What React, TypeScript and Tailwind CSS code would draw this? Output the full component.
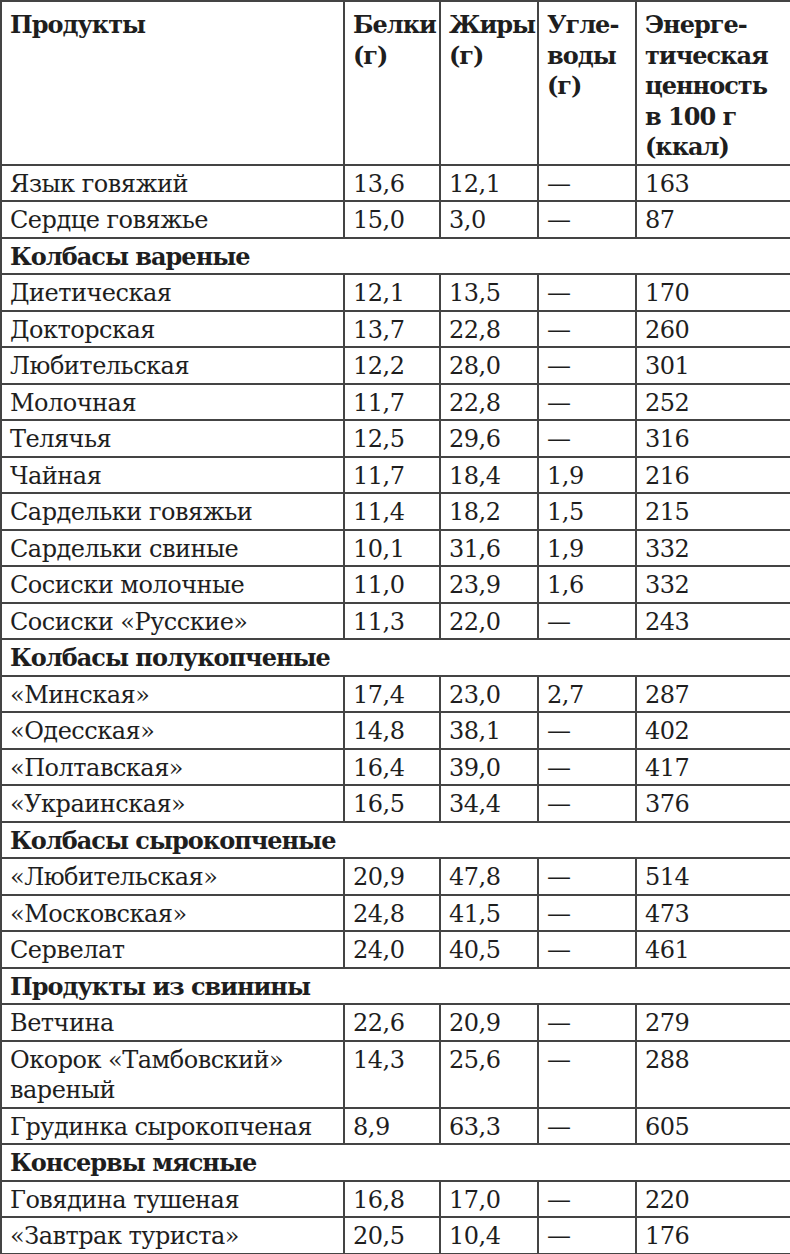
import React from 'react'

type Row =
    | { kind: 'item'; name: string; b: string; f: string; c: string; e: string }
    | { kind: 'section'; name: string }

const rows: Row[] = [
    { kind: 'item', name: 'Язык говяжий', b: '13,6', f: '12,1', c: '—', e: '163' },
    { kind: 'item', name: 'Сердце говяжье', b: '15,0', f: '3,0', c: '—', e: '87' },
    { kind: 'section', name: 'Колбасы вареные' },
    { kind: 'item', name: 'Диетическая', b: '12,1', f: '13,5', c: '—', e: '170' },
    { kind: 'item', name: 'Докторская', b: '13,7', f: '22,8', c: '—', e: '260' },
    { kind: 'item', name: 'Любительская', b: '12,2', f: '28,0', c: '—', e: '301' },
    { kind: 'item', name: 'Молочная', b: '11,7', f: '22,8', c: '—', e: '252' },
    { kind: 'item', name: 'Телячья', b: '12,5', f: '29,6', c: '—', e: '316' },
    { kind: 'item', name: 'Чайная', b: '11,7', f: '18,4', c: '1,9', e: '216' },
    { kind: 'item', name: 'Сардельки говяжьи', b: '11,4', f: '18,2', c: '1,5', e: '215' },
    { kind: 'item', name: 'Сардельки свиные', b: '10,1', f: '31,6', c: '1,9', e: '332' },
    { kind: 'item', name: 'Сосиски молочные', b: '11,0', f: '23,9', c: '1,6', e: '332' },
    { kind: 'item', name: 'Сосиски «Русские»', b: '11,3', f: '22,0', c: '—', e: '243' },
    { kind: 'section', name: 'Колбасы полукопченые' },
    { kind: 'item', name: '«Минская»', b: '17,4', f: '23,0', c: '2,7', e: '287' },
    { kind: 'item', name: '«Одесская»', b: '14,8', f: '38,1', c: '—', e: '402' },
    { kind: 'item', name: '«Полтавская»', b: '16,4', f: '39,0', c: '—', e: '417' },
    { kind: 'item', name: '«Украинская»', b: '16,5', f: '34,4', c: '—', e: '376' },
    { kind: 'section', name: 'Колбасы сырокопченые' },
    { kind: 'item', name: '«Любительская»', b: '20,9', f: '47,8', c: '—', e: '514' },
    { kind: 'item', name: '«Московская»', b: '24,8', f: '41,5', c: '—', e: '473' },
    { kind: 'item', name: 'Сервелат', b: '24,0', f: '40,5', c: '—', e: '461' },
    { kind: 'section', name: 'Продукты из свинины' },
    { kind: 'item', name: 'Ветчина', b: '22,6', f: '20,9', c: '—', e: '279' },
    { kind: 'item', name: 'Окорок «Тамбовский» вареный', b: '14,3', f: '25,6', c: '—', e: '288' },
    { kind: 'item', name: 'Грудинка сырокопченая', b: '8,9', f: '63,3', c: '—', e: '605' },
    { kind: 'section', name: 'Консервы мясные' },
    { kind: 'item', name: 'Говядина тушеная', b: '16,8', f: '17,0', c: '—', e: '220' },
    { kind: 'item', name: '«Завтрак туриста»', b: '20,5', f: '10,4', c: '—', e: '176' },
]

const cell = 'border-2 border-[#444] pl-[8px] pr-[4px] pt-[3px] pb-[1px] align-top'
const head = 'border-2 border-[#444] pl-[8px] pr-[2px] pt-[8px] pb-[1px] align-top text-left font-bold tracking-[-1px]'

export default function App() {
    return (
        <div className="w-[790px] bg-white text-[#1e1e1e] font-['DejaVu_Serif',serif] text-[24px] tracking-[-0.5px] leading-[30.5px]">
            <table className="w-[790px] border-collapse table-fixed">
                <colgroup>
                    <col className="w-[343px]" />
                    <col className="w-[96px]" />
                    <col className="w-[98px]" />
                    <col className="w-[98px]" />
                    <col className="w-[155px]" />
                </colgroup>
                <thead>
                    <tr>
                        <th className={head}>Продукты</th>
                        <th className={head}>Белки<br />(г)</th>
                        <th className={head}>Жиры<br />(г)</th>
                        <th className={head}>Угле-<br />воды<br />(г)</th>
                        <th className={head}>Энерге-<br />тическая<br />ценность<br />в 100 г<br />(ккал)</th>
                    </tr>
                </thead>
                <tbody>
                    {rows.map((r, i) =>
                        r.kind === 'section' ? (
                            <tr key={i}>
                                <td colSpan={5} className={cell + ' font-bold tracking-[-1px]'}>{r.name}</td>
                            </tr>
                        ) : (
                            <tr key={i}>
                                <td className={cell}>{r.name}</td>
                                <td className={cell}>{r.b}</td>
                                <td className={cell}>{r.f}</td>
                                <td className={cell}>{r.c}</td>
                                <td className={cell}>{r.e}</td>
                            </tr>
                        )
                    )}
                </tbody>
            </table>
        </div>
    )
}
